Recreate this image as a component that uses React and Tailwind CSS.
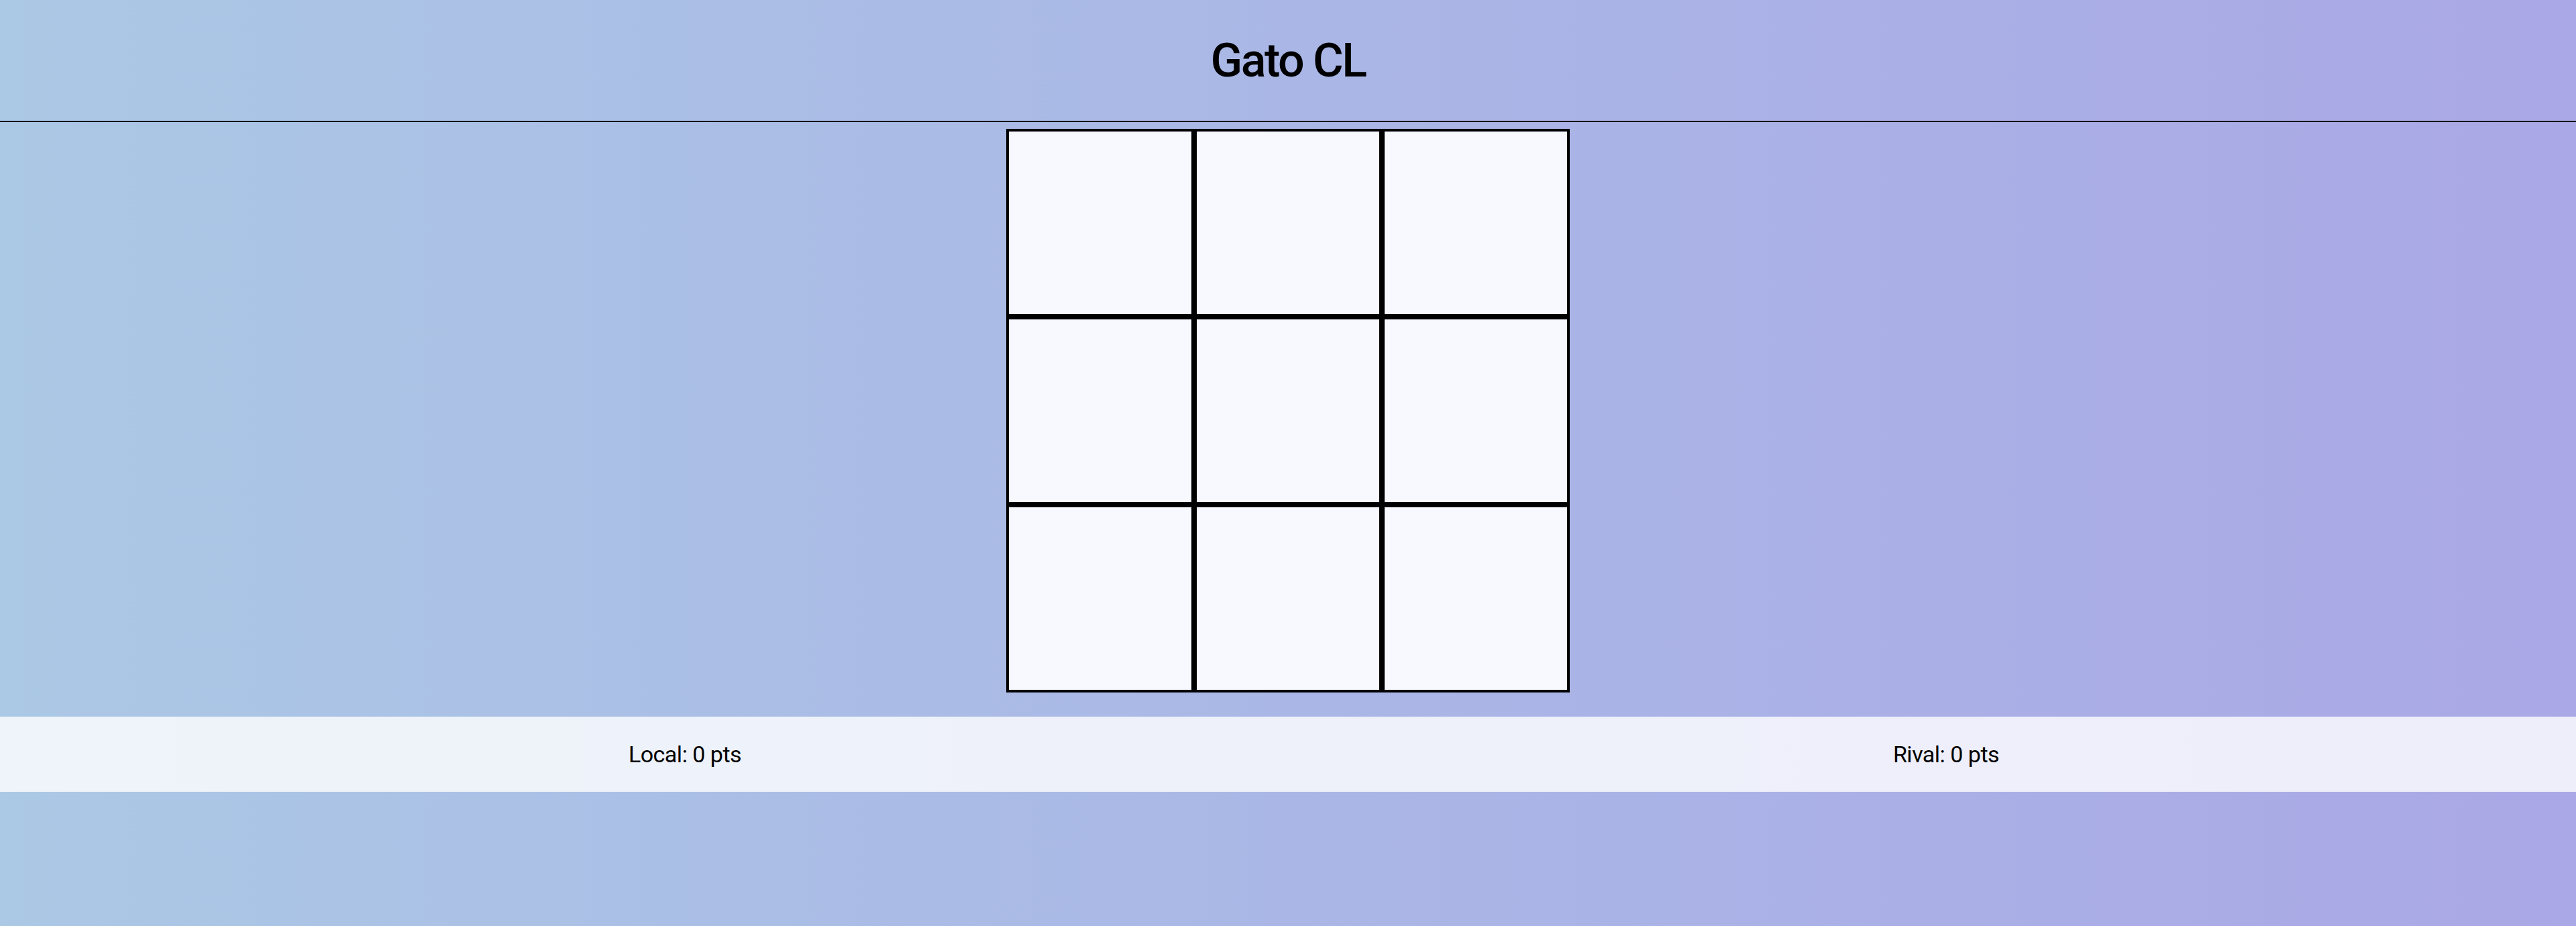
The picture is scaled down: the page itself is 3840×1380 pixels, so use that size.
export default function App() {
  const cells = Array.from({ length: 9 });
  return (
    <div className="min-h-screen w-full bg-gradient-to-r from-[#abc8e5] via-[#aab7e6] to-[#aaa8e6] text-black" style={{ fontFamily: "Roboto, 'Noto Sans', sans-serif" }}>
      <header className="h-[182px] flex items-center justify-center border-b-2 border-[#151515]">
        <h1 className="text-[70px] leading-none tracking-[-2.5px] font-medium">Gato CL</h1>
      </header>
      <div className="flex justify-center mt-[10px]">
        <div className="grid grid-cols-3 w-[840px]">
          {cells.map((_, i) => (
            <div key={i} className="w-[280px] h-[280px] border-4 border-black bg-[#f7f9fe]" />
          ))}
        </div>
      </div>
      <div className="mt-[36px] h-[112px] bg-white/80 grid grid-cols-2 items-center">
        <div className="flex justify-center pl-[122px]">
          <span className="text-[34px] tracking-[-0.5px]">Local: 0 pts</span>
        </div>
        <div className="flex justify-center pl-[42px]">
          <span className="text-[34px] tracking-[-0.5px]">Rival: 0 pts</span>
        </div>
      </div>
    </div>
  );
}
